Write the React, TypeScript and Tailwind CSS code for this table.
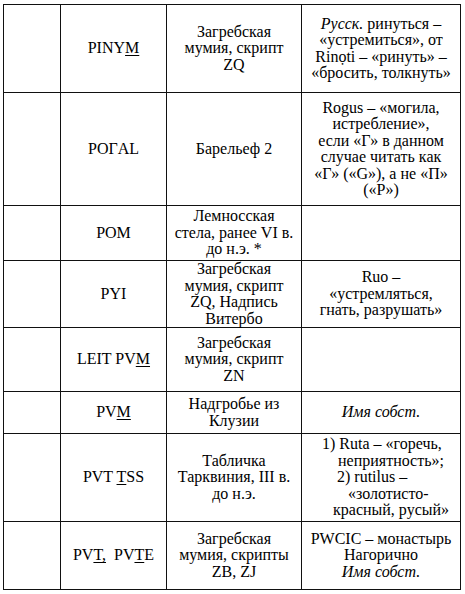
import React from 'react';

type Row = {
  h: string;
  name: React.ReactNode;
  source: React.ReactNode;
  note?: React.ReactNode;
};

const U = ({ children }: { children: React.ReactNode }) => (
  <span className="underline underline-offset-[2px] decoration-1 [font-family:Liberation_Serif]">{children}</span>
);

const I = ({ children }: { children: React.ReactNode }) => (
  <i className="italic [font-family:Liberation_Serif]">{children}</i>
);

const rows: Row[] = [
  {
    h: 'h-[88px]',
    name: <>PINY<U>M</U></>,
    source: <>Загребская<br />мумия, скрипт<br />ZQ</>,
    note: (
      <>
        <I>Русск.</I> ринуться –<br />«устремиться», от<br />Rinọti – «ринуть» –<br />«бросить, толкнуть»
      </>
    ),
  },
  {
    h: 'h-[113px]',
    name: 'POГAL',
    source: 'Барельеф 2',
    note: (
      <>
        Rogus – «могила,<br />истребление»,<br />если «Г» в данном<br />случае читать как<br />«Г» («G»), а не «П»<br />(«P»)
      </>
    ),
  },
  {
    h: 'h-[55px]',
    name: 'POM',
    source: <>Лемносская<br />стела, ранее VI в.<br />до н.э. *</>,
  },
  {
    h: 'h-[67px]',
    name: 'PYI',
    source: <>Загребская<br />мумия, скрипт<br />ZQ, Надпись<br />Витербо</>,
    note: <>Ruo –<br />«устремляться,<br />гнать, разрушать»</>,
  },
  {
    h: 'h-[64px]',
    name: <>LEIT PV<U>M</U></>,
    source: <>Загребская<br />мумия, скрипт<br />ZN</>,
  },
  {
    h: 'h-[42px]',
    name: <>PV<U>M</U></>,
    source: <>Надгробье из<br />Клузии</>,
    note: <I>Имя собст.</I>,
  },
  {
    h: 'h-[88px]',
    name: <>PVT <U>T</U>SS</>,
    source: <>Табличка<br />Тарквиния, III в.<br />до н.э.</>,
    note: (
      <div className="text-left [font-family:Liberation_Serif]">
        <div className="pl-[20px] [font-family:Liberation_Serif]">1) Ruta – «горечь,</div>
        <div className="pl-[36px] [font-family:Liberation_Serif]">неприятность»;</div>
        <div className="pl-[35px] [font-family:Liberation_Serif]">2) rutilus –</div>
        <div className="pl-[46px] [font-family:Liberation_Serif]">«золотисто-</div>
        <div className="pl-[31px] [font-family:Liberation_Serif]">красный, русый»</div>
      </div>
    ),
  },
  {
    h: 'h-[68px]',
    name: <>PV<U>T,</U>&nbsp; PV<U>T</U>E</>,
    source: <>Загребская<br />мумия, скрипты<br />ZB, ZJ</>,
    note: <>PWCIC – монастырь<br />Нагорично<br /><I>Имя собст.</I></>,
  },
];

const cell = 'border-r border-[#111] flex items-center justify-center min-w-0';
const text = 'w-full text-center whitespace-nowrap [font-family:Liberation_Serif] text-[16px] leading-[16.5px]';

function App() {
  return (
    <div className="w-[465px] h-[594px] bg-white pt-[4px] pl-[3px] text-black [font-family:Liberation_Serif]">
      <div className="w-[458px] flex flex-col border-l border-t border-[#111]">
        {rows.map((r, i) => (
          <div
            key={i}
            className={`grid grid-cols-[57px_106px_135px_159px] border-b border-[#111] ${r.h}`}
          >
            <div className={cell} />
            <div className={cell}>
              <div className={text}>{r.name}</div>
            </div>
            <div className={cell}>
              <div className={text}>{r.source}</div>
            </div>
            <div className={cell}>
              <div className={text}>{r.note}</div>
            </div>
          </div>
        ))}
      </div>
    </div>
  );
}

export default App;
